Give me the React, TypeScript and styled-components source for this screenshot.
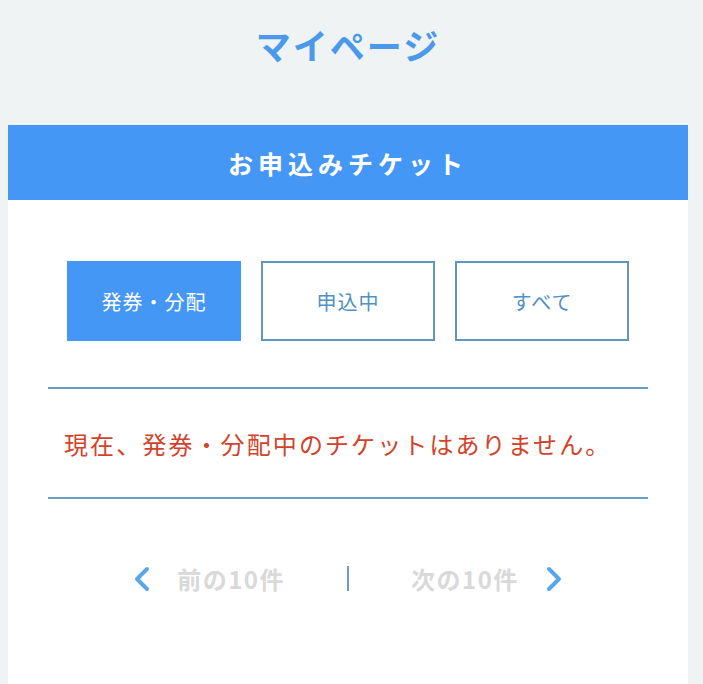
import React from 'react'
import styled, { createGlobalStyle } from 'styled-components'

const GlobalStyle = createGlobalStyle`
  html, body {
    margin: 0;
    padding: 0;
    background: #eff3f4;
    font-family: "Noto Sans CJK JP", "Noto Sans", sans-serif;
  }
`

const Page = styled.div`
  min-height: 684px;
  padding: 0 15px 0 8px;
  box-sizing: border-box;
  display: flex;
  flex-direction: column;
`

const Title = styled.h1`
  margin: 0;
  height: 125px;
  padding-top: 22px;
  box-sizing: border-box;
  text-align: center;
  color: #4a99ea;
  font-size: 35px;
  font-weight: 700;
  letter-spacing: 2px;
  line-height: 46px;
`

const Card = styled.section`
  flex: 1;
  background: #fff;
  width: 680px;
  padding-bottom: 80px;
`

const CardHeader = styled.h2`
  margin: 0;
  height: 75px;
  background: #4597f5;
  color: #fff;
  font-size: 25px;
  font-weight: 700;
  letter-spacing: 5px;
  display: flex;
  align-items: center;
  justify-content: center;
`

const Body = styled.div`
  padding: 61px 40px 0;
`

const Tabs = styled.div`
  display: flex;
  justify-content: center;
  gap: 20px;
  margin-bottom: 46px;
`

const Tab = styled.button<{ $active?: boolean }>`
  width: 174px;
  height: 80px;
  box-sizing: border-box;
  border: 2px solid ${({ $active }) => ($active ? '#4597f5' : '#5f97c0')};
  background: ${({ $active }) => ($active ? '#4597f5' : '#fff')};
  color: ${({ $active }) => ($active ? '#fff' : '#4f90c6')};
  font-family: inherit;
  font-size: 20px;
  letter-spacing: 1px;
  cursor: pointer;
`

const Notice = styled.div`
  border-top: 2px solid #6a9dc2;
  border-bottom: 2px solid #6a9dc2;
  height: 112px;
  box-sizing: border-box;
  padding-left: 16px;
  display: flex;
  align-items: center;
  color: #d3432b;
  font-size: 24px;
  letter-spacing: 2.1px;
`

const Pager = styled.nav`
  display: flex;
  justify-content: center;
  align-items: center;
  margin-top: 62px;
`

const PagerLink = styled.a`
  display: flex;
  align-items: center;
  gap: 26px;
  color: #d9d9d9;
  font-size: 24px;
  font-weight: 700;
  letter-spacing: 1.5px;
  text-decoration: none;
  cursor: pointer;
`

const Separator = styled.span`
  width: 2px;
  height: 25px;
  background: #6a9dc2;
  margin: 0 62px;
`

const Chevron = ({ dir }: { dir: 'left' | 'right' }) => (
  <svg width="18" height="26" viewBox="0 0 18 26">
    <path
      d={dir === 'left' ? 'M14 3 L4 13 L14 23' : 'M4 3 L14 13 L4 23'}
      fill="none"
      stroke="#5aa6ea"
      strokeWidth="4"
      strokeLinecap="round"
      strokeLinejoin="round"
    />
  </svg>
)

const tabs = ['発券・分配', '申込中', 'すべて']

const App: React.FC = () => (
  <>
    <GlobalStyle />
    <Page>
      <Title>マイページ</Title>
      <Card>
        <CardHeader>お申込みチケット</CardHeader>
        <Body>
          <Tabs>
            {tabs.map((t, i) => (
              <Tab key={t} $active={i === 0}>
                {t}
              </Tab>
            ))}
          </Tabs>
          <Notice>現在、発券・分配中のチケットはありません。</Notice>
          <Pager>
            <PagerLink>
              <Chevron dir='left' />
              前の10件
            </PagerLink>
            <Separator />
            <PagerLink>
              次の10件
              <Chevron dir='right' />
            </PagerLink>
          </Pager>
        </Body>
      </Card>
    </Page>
  </>
)

export default App
